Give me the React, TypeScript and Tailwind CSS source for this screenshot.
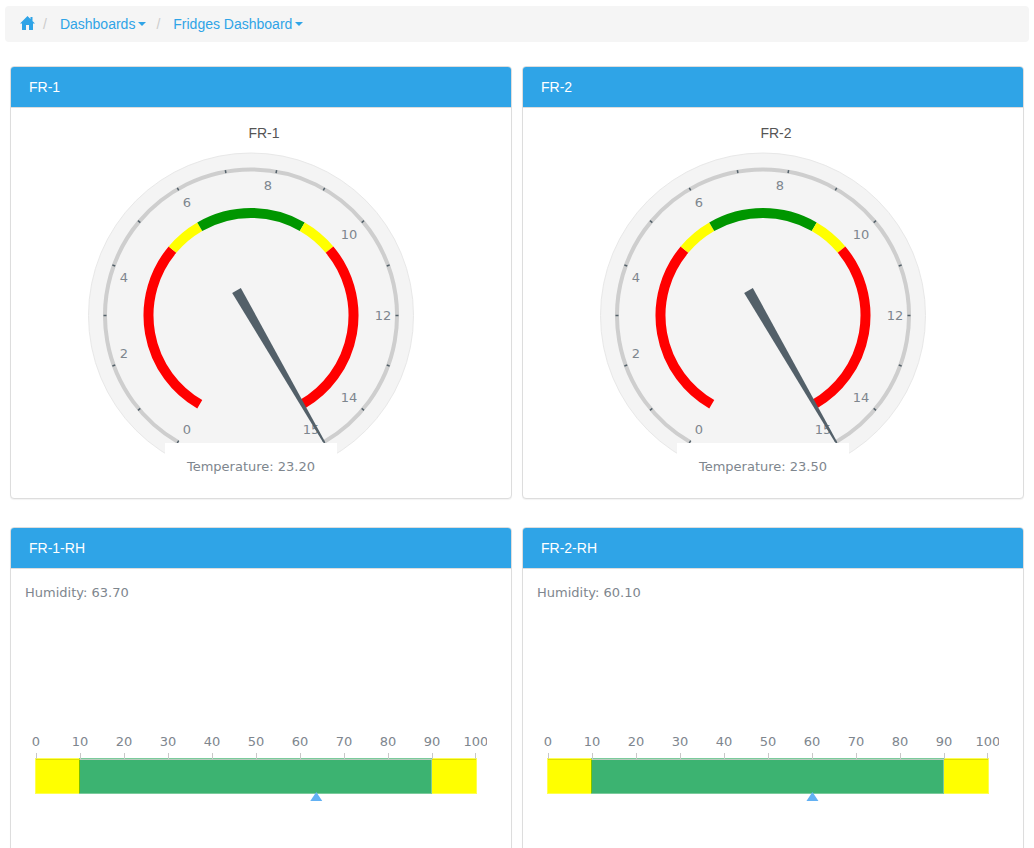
import type { ReactNode } from "react";

type Band = { from: number; to: number; color: string };

const CX = 164;
const CY = 163.5;
const DIAL_BANDS: Band[] = [
  { from: 0, to: 5, color: "#ff0000" },
  { from: 5, to: 6, color: "#ffff00" },
  { from: 6, to: 9, color: "#009600" },
  { from: 9, to: 10, color: "#ffff00" },
  { from: 10, to: 15, color: "#ff0000" },
];
const DIAL_LABELS = [
  { text: "0", x: 100, y: 282 },
  { text: "2", x: 37, y: 206 },
  { text: "4", x: 37, y: 130 },
  { text: "6", x: 100, y: 55 },
  { text: "8", x: 181, y: 38 },
  { text: "10", x: 262, y: 87 },
  { text: "12", x: 296, y: 168 },
  { text: "14", x: 262, y: 250 },
  { text: "15", x: 224, y: 282 },
];

// The dial spans 300 degrees for the values 0 to 15, with 7.5 at the top.
function point(value: number, radius: number) {
  const a = ((value * 20 - 150) * Math.PI) / 180;
  return { x: CX + radius * Math.sin(a), y: CY - radius * Math.cos(a) };
}

function arc(from: number, to: number, radius: number) {
  const s = point(from, radius);
  const e = point(to, radius);
  const large = (to - from) * 20 > 180 ? 1 : 0;
  return `M${s.x} ${s.y}A${radius} ${radius} 0 ${large} 1 ${e.x} ${e.y}`;
}

function Dial({ name, value }: { name: string; value: string }) {
  const v = Math.min(15, Number(value));
  const rotation = v * 20 - 150;
  return (
    <svg
      role="img"
      aria-label={`${name} temperature ${value}`}
      viewBox="0 0 328 330"
      className="h-[330px] w-[328px] max-w-full font-['DejaVu_Sans',Verdana,sans-serif] text-[13px]"
    >
      <circle cx={CX} cy={CY} r="162.5" fill="#f4f4f4" stroke="#e8e8e8" />
      <path d={arc(0, 15, 146)} fill="none" stroke="#cecece" strokeWidth="4" />
      {Array.from({ length: 16 }, (_, i) => {
        const a = point(i, 144.5);
        const b = point(i, 147.5);
        return <line key={i} x1={a.x} y1={a.y} x2={b.x} y2={b.y} stroke="#536069" strokeWidth={1.5} />;
      })}
      {DIAL_BANDS.map((b) => (
        <path key={b.from} d={arc(b.from, b.to, 102.5)} fill="none" stroke={b.color} strokeWidth="10" />
      ))}
      {DIAL_LABELS.map((l) => (
        <text key={l.text} x={l.x} y={l.y} textAnchor="middle" fill="#7e868e">
          {l.text}
        </text>
      ))}
      <path
        d={`M${CX - 5} ${CY + 29}L${CX + 5} ${CY + 29}L${CX + 1} ${CY - 146}H${CX - 1}Z`}
        transform={`rotate(${rotation} ${CX} ${CY})`}
        fill="#536069"
      />
      <rect x="78" y="291" width="172" height="39" fill="#fff" />
      <text x={CX} y="319" textAnchor="middle" fill="#7e868e">
        Temperature: {value}
      </text>
    </svg>
  );
}

function LinearGauge({ name, value }: { name: string; value: string }) {
  const x = 11 + Number(value) * 4.4;
  return (
    <svg
      role="img"
      aria-label={`${name} humidity ${value}`}
      viewBox="0 0 462 80"
      className="h-20 w-[462px] max-w-full overflow-hidden font-['DejaVu_Sans',Verdana,sans-serif] text-[13px]"
    >
      <g shapeRendering="crispEdges">
        <rect x="10" y="27" width="442" height="36" fill="#ffff50" />
        <rect x="11" y="28" width="440" height="34" fill="#ffff00" />
        <rect x="54" y="27" width="353" height="36" fill="#7bcb9c" />
        <rect x="55" y="28" width="351" height="34" fill="#3cb371" />
        <rect x="54" y="28" width="1" height="34" fill="#7ac000" />
        <rect x="11" y="28" width="44" height="1" fill="#e0e000" />
        <rect x="55" y="28" width="352" height="1" fill="#b8cdbf" />
        <rect x="407" y="28" width="44" height="1" fill="#e0e000" />
        {Array.from({ length: 11 }, (_, i) => (
          <rect key={i} x={11 + i * 44 - (i === 10 ? 1 : 0)} y="22" width="1" height="6" fill="#c8c8c8" />
        ))}
      </g>
      {Array.from({ length: 11 }, (_, i) => (
        <text key={i} x={11 + i * 44} y="15" textAnchor="middle" fill="#7e868e">
          {i * 10}
        </text>
      ))}
      <path d={`M${x} 61L${x + 6} 70H${x - 6}Z`} fill="#63b1f3" />
    </svg>
  );
}

function Panel({ title, children }: { title: string; children: ReactNode }) {
  return (
    <section className="min-w-0 rounded border border-[#dddddd] bg-white shadow-[0_1px_1px_rgba(0,0,0,0.05)]">
      <h2 className="rounded-t-[3px] border-b border-[#dddddd] bg-[#2fa4e7] px-[18px] py-2.5 text-sm leading-5 text-white">
        {title}
      </h2>
      <div className="flex min-h-[390px] flex-col">{children}</div>
    </section>
  );
}

function TemperaturePanel({ name, value }: { name: string; value: string }) {
  return (
    <Panel title={name}>
      <h3 className="pt-[15px] pl-1.5 text-center text-sm leading-5 text-[#555555]">{name}</h3>
      <div className="mt-[9px] flex justify-center pr-5">
        <Dial name={name} value={value} />
      </div>
    </Panel>
  );
}

function HumidityPanel({ name, value }: { name: string; value: string }) {
  return (
    <Panel title={name}>
      <div className="px-3.5 pt-3.5">
        <p className="font-['DejaVu_Sans',Verdana,sans-serif] text-[13px] leading-5 text-[#7e868e]">
          Humidity: {value}
        </p>
        <div className="pt-32">
          <LinearGauge name={name} value={value} />
        </div>
      </div>
    </Panel>
  );
}

function Crumb({ label }: { label: string }) {
  return (
    <li className="flex items-center">
      <span className="pr-[13px] text-[#cccccc]" aria-hidden="true">
        /
      </span>
      <button type="button" aria-haspopup="menu" className="flex items-center gap-[3px] text-[#2fa4e7]">
        {label}
        <svg viewBox="0 0 8 4" className="h-1 w-2" fill="currentColor" aria-hidden="true">
          <path d="M0 0H8L4 4Z" />
        </svg>
      </button>
    </li>
  );
}

export default function App() {
  return (
    <div className="min-h-screen bg-white px-[5px] pt-1.5 font-['Liberation_Sans',Arial,sans-serif]">
      <nav aria-label="Breadcrumb" className="rounded bg-[#f5f5f5] px-[15px] py-2">
        <ol className="flex items-center gap-2.5 text-sm leading-5">
          <li className="-mr-0.5">
            <a href="#home" aria-label="Home" className="block pb-0.5 text-[#2fa4e7]">
              <svg viewBox="0 0 15 14" className="h-3.5 w-[15px]" fill="currentColor" aria-hidden="true">
                <path d="M7.5 0L15 7.5H13V13.5Q13 14 12.5 14H9V9H6V14H2.5Q2 14 2 13.5V7.5H0ZM10.5 1H12.5V5.5L10.5 3.5Z" />
              </svg>
            </a>
          </li>
          <Crumb label="Dashboards" />
          <Crumb label="Fridges Dashboard" />
        </ol>
      </nav>
      <main className="grid grid-cols-2 gap-x-2.5 gap-y-7 px-[5px] pt-6">
        <TemperaturePanel name="FR-1" value="23.20" />
        <TemperaturePanel name="FR-2" value="23.50" />
        <HumidityPanel name="FR-1-RH" value="63.70" />
        <HumidityPanel name="FR-2-RH" value="60.10" />
      </main>
    </div>
  );
}
